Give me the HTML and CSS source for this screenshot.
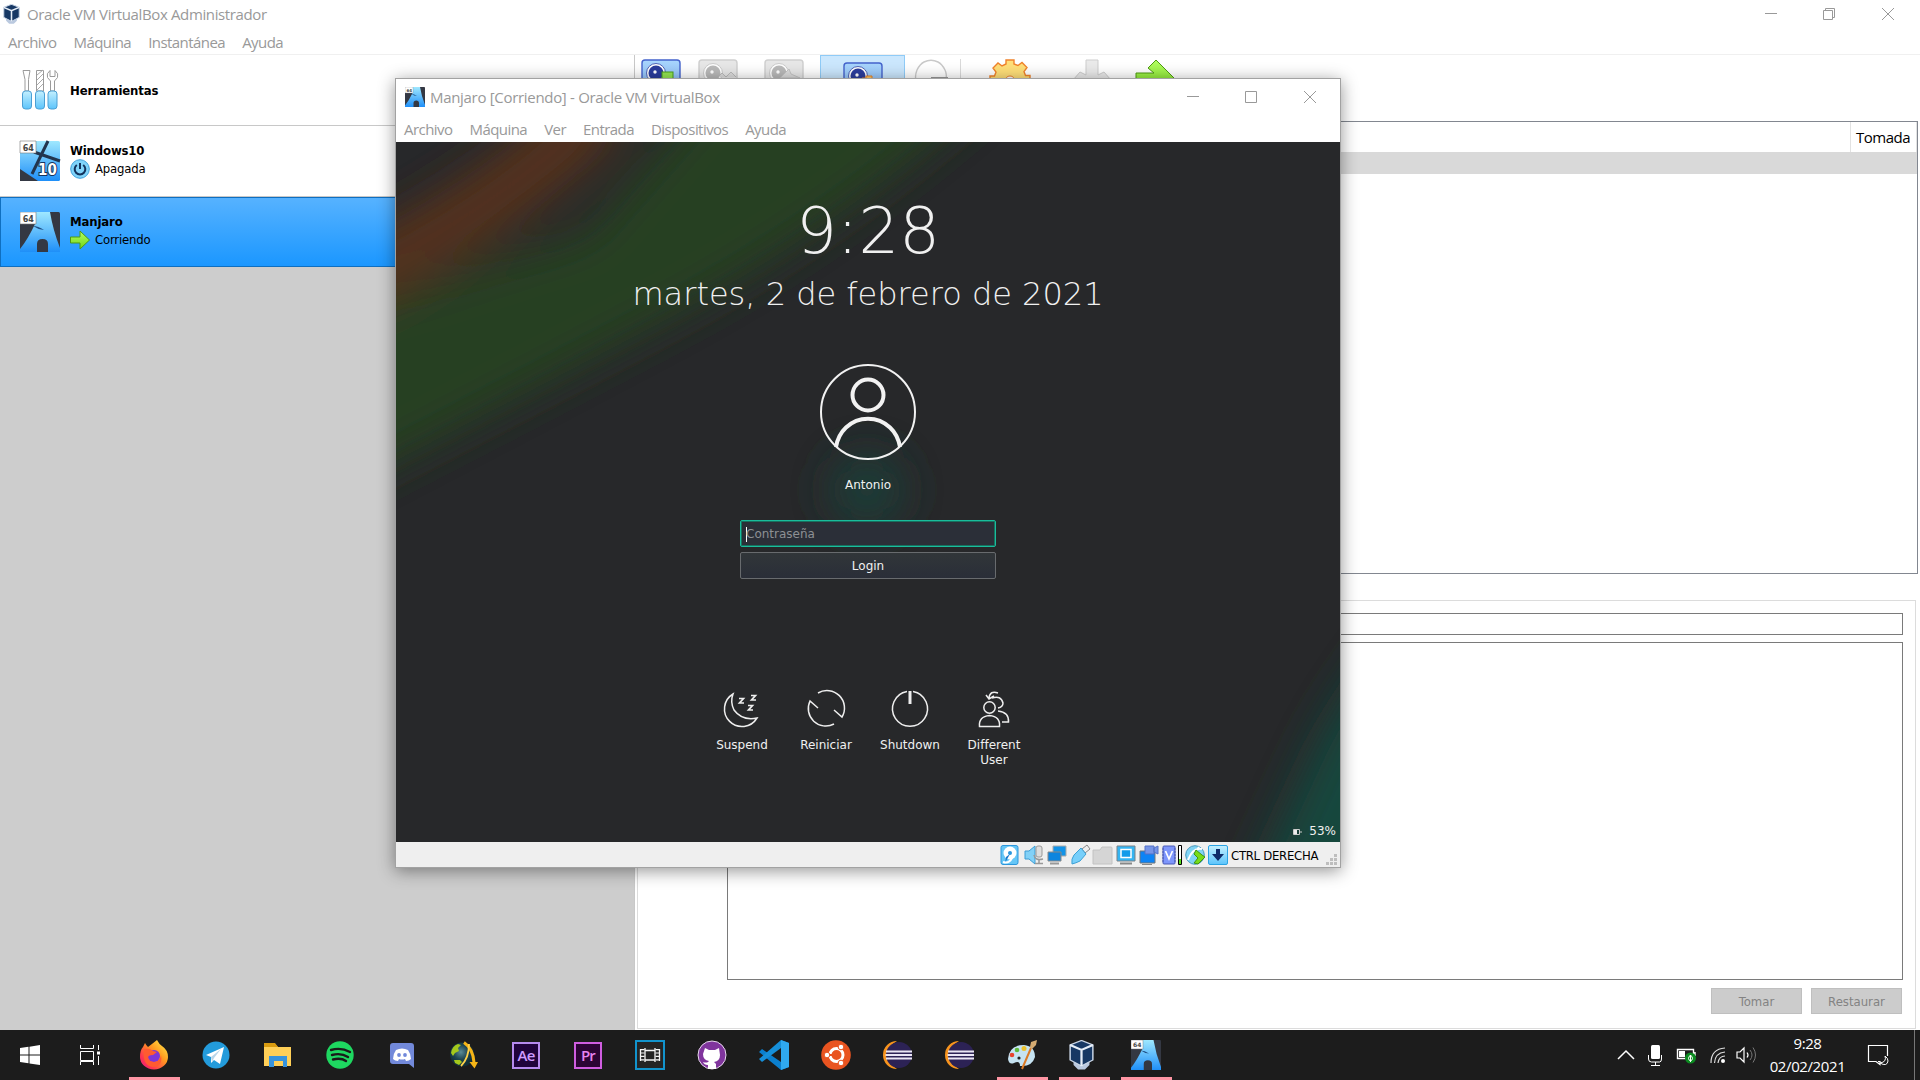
FILE: index.html
```html
<!DOCTYPE html>
<html lang="es">
<head>
<meta charset="utf-8">
<title>Oracle VM VirtualBox Administrador</title>
<link rel="stylesheet" href="styles.css">
</head>
<body>
<svg class="defs" width="0" height="0" aria-hidden="true">
  <defs>
    <linearGradient id="sky" x1="0" y1="0" x2="0" y2="1"><stop offset="0" stop-color="#9fe8ff"/><stop offset="1" stop-color="#1f8ff8"/></linearGradient>
    <linearGradient id="ice" x1="0" y1="0" x2="0" y2="1"><stop offset="0" stop-color="#c4f0ff"/><stop offset="1" stop-color="#5cc4fb"/></linearGradient>
    <linearGradient id="lime" x1="0" y1="0" x2="0" y2="1"><stop offset="0" stop-color="#b4ff62"/><stop offset="1" stop-color="#6fd516"/></linearGradient>
    <linearGradient id="cam" x1="0" y1="0" x2="0" y2="1"><stop offset="0" stop-color="#a9d6fd"/><stop offset="1" stop-color="#7fb0f5"/></linearGradient>
    <linearGradient id="fox" x1="1" y1="0" x2="0" y2="1"><stop offset="0" stop-color="#fff44f"/><stop offset=".4" stop-color="#ff9a1f"/><stop offset=".75" stop-color="#ff3650"/><stop offset="1" stop-color="#e31587"/></linearGradient>
    <radialGradient id="globe" cx=".45" cy=".4"><stop offset="0" stop-color="#5b8b97"/><stop offset=".6" stop-color="#1e4652"/><stop offset="1" stop-color="#123039"/></radialGradient>
    <symbol id="arch" viewBox="0 0 40 40">
      <rect width="40" height="40" rx="1.500" fill="#343843"/>
      <path d="M16 0h14q3 18 10 36v4H28v-8q0-5-5.500-5T17 32v8H0v-3Q8 27 15 12z" fill="url(#sky)"/>
      <path d="M13 14q5 0 11 4-6-.500-11-4" fill="#1d4d82"/>
      <path d="M0 0h16v12H0z" fill="#fff" stroke="#777" stroke-width=".6"/>
      <text x="2.800" y="9.500" class="badge-text">64</text>
    </symbol>
    <symbol id="cube" viewBox="1 0 22 30" preserveAspectRatio="none">
      <path d="M5 20h14v5l-4 4.500H9L5 25z" fill="#bac9df"/>
      <path d="M12 .5 22 5v15l-10 6L2 20V5z" fill="#173864" stroke="#cad6e6" stroke-width="1.300"/>
      <path d="M2 5l10 5L22 5M12 10v16" fill="none" stroke="#e6eef8" stroke-width="2"/>
    </symbol>
    <symbol id="camera" viewBox="0 0 40 40">
      <rect x="1" y="1" width="38" height="38" rx="3" fill="url(#cam)" stroke="#4463cc" stroke-width="1.400"/>
      <circle cx="15" cy="14" r="9.500" fill="#fff" stroke="#5064b8"/><circle cx="15" cy="14" r="7.500" fill="#2b3d9d"/><circle cx="14" cy="13" r="1.700" fill="#fff"/>
    </symbol>
    <symbol id="camera-off" viewBox="0 0 40 40">
      <rect x="1" y="1" width="38" height="38" rx="3" fill="#e7e7e7" stroke="#cfcfcf" stroke-width="1.400"/>
      <circle cx="15" cy="14" r="9.500" fill="#fff" stroke="#ccc"/><circle cx="15" cy="14" r="7.500" fill="#bababa"/><circle cx="14" cy="13" r="1.700" fill="#fff"/>
    </symbol>
    <symbol id="eclipse" viewBox="0 0 30 28">
      <path d="M15 0A14 14 0 0 0 15 28 16 16 0 0 1 15 0" fill="#f7941e"/>
      <circle cx="17" cy="14" r="13" fill="#2c2255"/>
      <path d="M4 10.500h26M3.500 14h27M4 17.500h26" stroke="#e9e6f4" stroke-width="2"/>
    </symbol>
    <symbol id="arrow" viewBox="0 0 20 20">
      <path d="M.5 7H10V1l9.500 9-9.500 9v-6H.5z" fill="url(#lime)" stroke="#4f9a13"/>
    </symbol>
  </defs>
</svg>

<div class="desktop">
  <main class="manager">
    <header class="titlebar">
      <svg class="title-icon" viewBox="0 0 17 20"><use href="#cube" width="17" height="20"/></svg>
      <span class="title-text">Oracle VM VirtualBox Administrador</span>
      <div class="window-buttons">
        <svg width="12" height="12"><path d="M1 5.500h12"/></svg>
        <svg width="12" height="12"><path d="M.5 2.500h9v9h-9zM2.500 2.500v-2h9v9h-2"/></svg>
        <svg width="12" height="12"><path d="M0 0l12 12M12 0L0 12"/></svg>
      </div>
    </header>
    <nav class="menubar"><span>Archivo</span><span>Máquina</span><span>Instantánea</span><span>Ayuda</span></nav>
    <div class="workspace">
      <aside class="sidebar">
        <div class="machine tools">
          <svg class="machine-icon" viewBox="0 0 40 40">
            <g fill="#fff" stroke="#9b9b9b"><path d="M3 .5h7l-1.500 9V21H5V9.500zM16.500.5h7V21h-7z"/><path d="M30 .5q-4 3-2.500 7l3 3.500v10h4V11l3-3.500q1.500-4-2.500-7v6h-5z"/></g>
            <path d="M17 5l6-5M17 10l6-6M17 15l6-6M17 20l6-6" stroke="#aaa"/>
            <g fill="url(#ice)" stroke="#4b9fd4"><rect x="2.500" y="21" width="9" height="18" rx="3"/><rect x="15.500" y="21" width="9" height="18" rx="3"/><rect x="28" y="21" width="9" height="18" rx="3"/></g>
          </svg>
          <div class="machine-info"><b>Herramientas</b></div>
        </div>
        <div class="machine">
          <svg class="machine-icon" viewBox="0 0 40 40">
            <rect width="40" height="40" rx="1.500" fill="url(#sky)"/>
            <path d="M0 28l18 12H0z" fill="#343843"/>
            <path d="M28 0L12 33M14 11l26 9" stroke="#22354e" stroke-width="3"/>
            <path d="M0 0h16v12H0z" fill="#fff" stroke="#777" stroke-width=".6"/><text x="2.800" y="9.500" class="badge-text">64</text>
            <text x="18" y="34" class="ten-text">10</text>
          </svg>
          <div class="machine-info"><b>Windows10</b>
            <span class="state"><svg width="20" height="20"><circle cx="10" cy="10" r="9.300" fill="#7fd3fa" stroke="#3f9fda"/><path d="M10 4v6M6.800 6a5.300 5.300 0 1 0 6.400 0" fill="none" stroke="#12325c" stroke-width="2"/></svg>Apagada</span></div>
        </div>
        <div class="machine selected">
          <svg class="machine-icon" viewBox="0 0 40 40"><use href="#arch"/></svg>
          <div class="machine-info"><b>Manjaro</b>
            <span class="state"><svg width="20" height="20"><use href="#arrow"/></svg>Corriendo</span></div>
        </div>
      </aside>
      <section class="snapshots">
        <div class="toolbar">
          <svg class="tool take" viewBox="0 0 40 40"><use href="#camera"/><rect x="21" y="13" width="11" height="14" fill="#94e552" stroke="#4aa01d"/></svg>
          <svg class="tool remove" viewBox="0 0 40 40"><use href="#camera-off"/><path d="M20 18l4-4 4 4 5-5 5 5" fill="#ddd" stroke="#bbb"/></svg>
          <svg class="tool restore" viewBox="0 0 40 40"><use href="#camera-off"/><path d="M25 10l-9 9h20l-9-4z" fill="#ddd" stroke="#c5c5c5"/></svg>
          <div class="tool-active"><svg viewBox="0 0 40 40"><use href="#camera"/><path d="M19 19v-3h4v-2h6v3h4l3 3v10H19z" fill="#ffca65" stroke="#e58328"/></svg></div>
          <svg class="tool clone" viewBox="0 0 40 40"><path d="M5 26q-3-8 0-15 3-6 7-8 7-3.500 14 0 4 2 7 8 2 4 1 10" fill="#fff" stroke="#c9c9c9" stroke-width="1.400"/><path d="M19 19.500h17" stroke="#999" stroke-width="3"/></svg>
          <i class="separator"></i>
          <svg class="tool gear" viewBox="0 0 40 40"><path d="M16 5V1h8v4l4 1.500 4-3 5 5-3 4 1.500 4H40v8h-4L20 36 4 24H0v-7h4.500l1.500-4-3-4 5-5 4 3z" fill="#ffdf79" stroke="#f0832b" stroke-width="1.400"/><circle cx="20" cy="22" r="5" fill="#fff" stroke="#f0832b"/></svg>
          <svg class="tool down" viewBox="0 0 40 40"><path d="M14 1h12v15l6-3 7 8-19 18L1 21l7-8 6 3z" fill="#eaeaea" stroke="#cdcdcd"/></svg>
          <svg class="tool start" viewBox="0 0 40 40"><path d="M0 14h18l-6-5 8-8 19 19-19 19-8-9 5-5H0z" fill="url(#lime)" stroke="#4f9a13"/></svg>
        </div>
        <div class="table">
          <div class="table-head"><span></span><span class="column-date">Tomada</span></div>
          <div class="table-row"></div>
        </div>
        <div class="details">
          <div class="name-box"></div>
          <div class="description-box"></div>
          <div class="detail-buttons"><span>Tomar</span><span>Restaurar</span></div>
        </div>
      </section>
    </div>
  </main>

  <footer class="taskbar">
    <div class="apps">
      <div class="app start"><svg width="20" height="20"><path d="M0 3l8.500-1.200v7.700H0zM9.500 1.700L20 0v9.500H9.500zM0 10.500h8.500v7.700L0 17zM9.500 10.500H20V20L9.500 18.500z" fill="#fff"/></svg></div>
      <div class="app view"><svg width="21" height="20"><path d="M.5 0v3.500h13V0M.5 6.500h13v9H.5zM.5 20v-3.500h13V20M18.500 0v5M18.500 11v9" fill="none" stroke="#fff"/><path d="M17 6.500h3v3h-3z" fill="#fff"/></svg></div>
      <div class="app open"><svg width="30" height="30" viewBox="0 0 30 30"><path d="M18 0q2 4 5 6 6 4 6 11a14 12.500 0 0 1-28 0q0-7 3-10l2-4q1 2 3 4 4-3 9-7" fill="url(#fox)"/><circle cx="15" cy="16" r="6" fill="#7c36d8"/><path d="M5 9q6-1 9 2l4 1-4 3q-6 0-5 4 2 3 6 3 6 0 7-7 2 12-8 12Q3 26 5 9" fill="#ff5b30"/></svg></div>
      <div class="app"><svg width="28" height="28"><circle cx="14" cy="14" r="13.500" fill="#239bdb"/><path d="M4 14l18-8-4 17-6-4-3 3v-6z" fill="#fff"/><path d="M9 16l10-8-7 9-2 4z" fill="#b9d5e9"/></svg></div>
      <div class="app"><svg width="28" height="26"><path d="M0 2h11l3 3h13v19H0z" fill="#ffcf57"/><path d="M0 1h11l3 4H0z" fill="#d99b10"/><path d="M5 14h18v11h-4v-6h-9v6H5z" fill="#3793dc"/></svg></div>
      <div class="app"><svg width="28" height="28"><circle cx="14" cy="14" r="13.700" fill="#1ed760"/><path d="M5 9q10-3 19 2M6 14q9-2.500 16 2M7 18.500q8-2 13 1.500" fill="none" stroke="#1a1a1a" stroke-width="2.400" stroke-linecap="round"/></svg></div>
      <div class="app"><svg width="24" height="26"><path d="M3 1h18q3 0 3 3v22l-5-4H3q-3 0-3-3V4q0-3 3-3" fill="#7289da"/><path d="M6 8q6-3 12 0 3 4 3 9-2 2-5 2l-1-2q-3 1-6 0l-1 2q-3 0-5-2 0-5 3-9" fill="#fff"/><circle cx="9" cy="13" r="1.900" fill="#7289da"/><circle cx="15" cy="13" r="1.900" fill="#7289da"/></svg></div>
      <div class="app"><svg width="28" height="28"><circle cx="12" cy="13.500" r="12" fill="url(#globe)"/><path d="M1 12Q2 5 8 3l3 1-3 3 1 3-4 2-2 3zM4 19l6 0 2 2-3 3-4-2z" fill="#a5c91c"/><path d="M14 1.500q9 6 10 20" fill="none" stroke="#f6b517" stroke-width="3"/><path d="M19.500 21H28l-3.500 6.500z" fill="#f6b517"/><path d="M19 3q0 14-8 22" fill="none" stroke="#ffd24a" stroke-width="1.800"/></svg></div>
      <div class="app"><div class="adobe ae">Ae</div></div>
      <div class="app"><div class="adobe pr">Pr</div></div>
      <div class="app"><svg width="30" height="30"><path d="M1 1h28v28H1z" fill="#242424" stroke="#1293cc" stroke-width="2"/><path d="M5.500 9v12M10 8v14M20 8v14M24.500 9v12M10 10.500h10M10 20h10" stroke="#f5f5f5" stroke-width="1.300"/><path d="M7.500 9v13M22.500 9v13" stroke="#f5f5f5" stroke-width="4" stroke-dasharray="1.200 2.200"/></svg></div>
      <div class="app"><svg width="30" height="30"><circle cx="15" cy="15" r="14" fill="#80359d" stroke="#e6d9ec"/><path d="M8 8l4 2h6l4-2 1 7q0 6-6 7l2 2v5h-8v-4q-4 0-5-3 3 1 5 0l1-1q-6-1-6-7z" fill="#fff"/></svg></div>
      <div class="app"><svg width="30" height="30"><path d="M22 0l8 3v24l-8 3L0 12l3-3 19 13z" fill="#0b7fce"/><path d="M22 0L0 19l3 3L22 8z" fill="#168fd9"/><path d="M22 0l8 3v24l-8 3z" fill="#2fa9ef"/></svg></div>
      <div class="app"><svg width="30" height="30"><circle cx="15" cy="15" r="14.800" fill="#e95420"/><circle cx="15.500" cy="15" r="6.500" fill="none" stroke="#fff" stroke-width="3"/><path d="M8 15h4M19 9l2-4M19 21l2 4" stroke="#e95420" stroke-width="2"/><g fill="#fff" stroke="#e95420"><circle cx="6" cy="15" r="2.800"/><circle cx="20" cy="7" r="2.800"/><circle cx="20" cy="23" r="2.800"/></g></svg></div>
      <div class="app"><svg class="eclipse" width="30" height="28"><use href="#eclipse"/></svg></div>
      <div class="app"><svg class="eclipse" width="30" height="28"><use href="#eclipse"/></svg></div>
      <div class="app open"><svg width="30" height="30"><path d="M1 19Q2 5 17 5q11 1 11 12-3 10-15 9 0-6-6-3-5 2-6-4" fill="#c6e3f2"/><circle cx="5" cy="15" r="2.300" fill="#e8432f"/><circle cx="10" cy="10" r="2.300" fill="#5fb93c"/><circle cx="17" cy="8.500" r="2.500" fill="#ecc22e"/><circle cx="12" cy="18" r="1.600" fill="#222"/><path d="M24 8L15 29" stroke="#db7a26" stroke-width="2"/><path d="M23 7l1-5 6-2-1 5-4 4z" fill="#d5ab72"/></svg></div>
      <div class="app open"><svg class="vbox" width="25" height="30"><use href="#cube"/></svg></div>
      <div class="app open"><svg width="30" height="30"><use href="#arch"/></svg></div>
    </div>
    <div class="tray">
      <svg width="18" height="10"><path d="M1 9l8-8 8 8" fill="none" stroke="#fff" stroke-width="1.500"/></svg>
      <svg width="14" height="21"><rect x="3" y="0" width="9" height="14" rx="1.500" fill="#fff"/><path d="M.5 10v4q0 3 3 3h8q2 0 2-3v-4M7.500 17v3.500M3 20.500h9" fill="none" stroke="#fff"/></svg>
      <svg width="20" height="18"><path d="M.5 3.500h16v9H.5zM18 6v4" fill="none" stroke="#fff" stroke-width="1.400"/><path d="M2 5h6v6H2z" fill="#fff"/><circle cx="13.500" cy="12" r="5.500" fill="#0b8b20"/><path d="M13.500 9q4 4 0 6-4-2 0-6v7" fill="none" stroke="#fff"/></svg>
      <svg width="16" height="16"><path d="M1 16Q1 2 15 1M4.500 16Q5 6 15 5M8 16q1-7 7-7" fill="none" stroke="#ddd" stroke-width="1.200"/><circle cx="13" cy="14" r="2" fill="#fff"/></svg>
      <svg width="21" height="18"><path d="M1 6h3l4-4v14l-4-4H1zM11 6.500q2 2.500 0 5" fill="none" stroke="#fff" stroke-width="1.200"/><path d="M14 4q4 5 0 10M17 1.500q5 7.500 0 15" fill="none" stroke="#777"/></svg>
      <div class="clock"><span>9:28</span><span>02/02/2021</span></div>
      <svg class="notice" width="21" height="21"><path d="M10 16.500h2v3l-4-3H.5V.5h19V11" fill="none" stroke="#fff" stroke-width="1.200"/><path d="M17 11q2 6-5 7 7 4 8-2 0-3-3-5" fill="#1c1c1c" stroke="#fff"/></svg>
      <i class="peek"></i>
    </div>
  </footer>

  <section class="guest">
    <header class="guest-title">
      <svg width="20" height="20"><use href="#arch"/></svg>
      <span class="guest-text">Manjaro [Corriendo] - Oracle VM VirtualBox</span>
      <div class="window-buttons">
        <svg width="12" height="12"><path d="M1 5.500h12"/></svg>
        <svg width="12" height="12"><path d="M.5.5h11v11H.5z"/></svg>
        <svg width="12" height="12"><path d="M0 0l12 12M12 0L0 12"/></svg>
      </div>
    </header>
    <nav class="menubar guest-menu"><span>Archivo</span><span>Máquina</span><span>Ver</span><span>Entrada</span><span>Dispositivos</span><span>Ayuda</span></nav>
    <div class="screen">
      <svg class="wallpaper" width="944" height="700" viewBox="0 0 944 700">
        <defs><filter id="soft" x="-50%" y="-50%" width="200%" height="200%"><feGaussianBlur stdDeviation="22"/></filter></defs>
        <rect width="944" height="700" fill="#27282a"/>
        <g filter="url(#soft)">
          <path d="M205-35Q115 60-50 140" fill="none" stroke="#55301c" stroke-width="66"/>
          <path d="M-90 365V195Q60 128 190 92L350-90H640Q465 75 275 175T-90 365" fill="#263f22"/>
          <path d="M1020 460Q945 550 915 615T830 800H1020z" fill="#17473d"/>
          <circle cx="471" cy="348" r="37" fill="#1a3d37"/>
        </g>
      </svg>
      <div class="login">
        <div class="time">9:28</div>
        <div class="date">martes, 2 de febrero de 2021</div>
        <svg class="avatar" width="96" height="96"><g fill="none" stroke="#f2f2f2"><circle cx="48" cy="48" r="47" stroke-width="2"/><circle cx="48" cy="31" r="15.500" stroke-width="4"/><path d="M16 83Q18 71 26 63.500a32 32 0 0 1 44 0Q78 71 80 83" stroke-width="4"/></g></svg>
        <div class="user">Antonio</div>
        <div class="password"><i></i>Contraseña</div>
        <div class="login-button">Login</div>
        <div class="actions">
          <div><svg width="38" height="38" viewBox="0 0 38 38"><path d="M10 4A17.500 17.500 0 1 0 34 28Q19 31 11 20 7 12 10 4z"/><path d="M16 8.500h4.500l-4 4.500H21M28 5.500h4.500l-4 4.500H33M25 15.500h4.500l-4 4.500H30" stroke-width="1.700"/></svg><span>Suspend</span></div>
          <div><svg width="38" height="38" viewBox="0 0 38 38"><path d="M11 3A17.500 17.500 0 0 1 35 27l-8-7M27 34A17.500 17.500 0 0 1 3 11l8 7"/></svg><span>Reiniciar</span></div>
          <div><svg width="38" height="38" viewBox="0 0 38 38"><path d="M16 1.500a17.500 17.500 0 1 0 6 0"/><path d="M19 1v13" stroke-width="3"/></svg><span>Shutdown</span></div>
          <div><svg width="38" height="38" viewBox="0 0 38 38"><circle cx="14.500" cy="17.500" r="5.700"/><path d="M4.500 36.500q-1-10 10-11 11 1 10 11zM17 8q9-3 11 5 0 4-5 5M23 21q11 1 10.500 11H27M23 3q-8-3-9 5M11 5l3 4 5-3"/></svg><span>Different User</span></div>
        </div>
      </div>
      <div class="battery"><svg width="9" height="6"><path d="M.5.500h6v5h-6zM8 2v2" fill="none" stroke="#ccc"/><path d="M1 1h3v4H1z" fill="#eee"/></svg>53%</div>
    </div>
    <footer class="guest-status">
      <svg class="disk" viewBox="0 0 20 20"><rect x="1" y="0.500" width="17" height="19" rx="2" fill="#65c6f6" stroke="#2c96dc"/><circle cx="10" cy="8" r="6.500" fill="#fff"/><circle cx="10" cy="8" r="2" fill="#2c96dc"/><path d="M10 9l-5 9 1-6z" fill="#1b78ca"/><path d="M3 17q6 2 9-4" fill="none" stroke="#fff" stroke-width="2"/></svg>
      <svg viewBox="0 0 20 20"><path d="M1 6h4l6-5v18l-6-5H1z" fill="#82d1f7" stroke="#3c9cd4"/><rect x="12" y="1" width="6" height="11" rx="2" fill="#ddd" stroke="#999"/><path d="M10 10q1 6 9 4M15 15v4M11 18.500h8" fill="none" stroke="#999" stroke-width="1.500"/></svg>
      <svg viewBox="0 0 20 20"><path d="M6 1h13v10H6z" fill="#1193e8" stroke="#aaa"/><path d="M1 7h13v9H1z" fill="#0c85df" stroke="#888"/><path d="M3 18.500h9" stroke="#999" stroke-width="2"/></svg>
      <svg viewBox="0 0 20 20"><path d="M12 4l5-4 3 4-5 4z" fill="#eee" stroke="#888"/><path d="M4 10l7-7 5 6-6 7q-4 2-8 3-1-5 2-9" fill="#77cffa" stroke="#3ca0d4"/></svg>
      <svg viewBox="0 0 20 20"><path d="M0 5h7l2-3h9q1 0 1 1v16H0z" fill="#d5d5d5" stroke="#c2c2c2"/></svg>
      <svg viewBox="0 0 20 20"><path d="M1 1h18v15H1z" fill="#34b4f2" stroke="#7a8187"/><path d="M5 4.500h10v8H5z" fill="#129bea" stroke="#fff" stroke-width="1.500"/><path d="M4 18.500h12" stroke="#888" stroke-width="2"/></svg>
      <svg viewBox="0 0 20 20"><path d="M1 6h15v12H1z" fill="#0d83f5" stroke="#777"/><path d="M6 1h9v8H6zM15 3l4-2v8l-4-2z" fill="#7694e6" stroke="#5370c7"/><path d="M3 19.500h10" stroke="#888"/></svg>
      <svg class="cpu" viewBox="0 0 21 20"><rect x="1" y="1" width="12" height="18" rx="1" fill="#7e96fb" stroke="#4b5bb7"/><path d="M0 4h14M0 7h14M0 10h14M0 13h14M0 16h14" stroke="#4b5bb7" stroke-dasharray="2 10"/><path d="M3.500 6L7 14l3.500-8" fill="none" stroke="#fff" stroke-width="1.700"/><path d="M16.500.5h3v19h-3z" fill="#fff" stroke="#000"/><path d="M17 14h2v5h-2z" fill="#5be01d"/></svg>
      <svg viewBox="0 0 20 20"><circle cx="10" cy="10" r="9.300" fill="#80d4f5" stroke="#4799bf"/><path d="M3 15Q8 2 17 4M14 2l-2 3" fill="none" stroke="#fff" stroke-width="2"/><path d="M11 5l6 5 3 2-7 7-4-1 4-5-4-4z" fill="#77dc18" stroke="#3e950d"/></svg>
      <svg viewBox="0 0 20 20"><rect x=".5" y=".5" width="19" height="19" rx="1.500" fill="url(#ice)" stroke="#2aa3e4"/><path d="M8 4h4v5h4l-6 7-6-7h4z" fill="#0e2b69"/></svg>
      <span class="host-key">CTRL DERECHA</span>
      <svg class="grip" width="11" height="11" viewBox="0 0 11 11"><path d="M8 0h3v3H8zM8 4h3v3H8zM4 4h3v3H4zM0 8h3v3H0zM4 8h3v3H4zM8 8h3v3H8z" fill="#bebebe"/></svg>
    </footer>
  </section>
</div>
</body>
</html>
```
FILE: styles.css
```css
* { box-sizing: border-box; }
body { margin: 0; background: #fff; color: #000; font-family: "Open Sans", "Noto Sans", sans-serif; font-size: 15px; }
svg { display: block; flex: none; overflow: visible; }
i { display: block; }
.defs { position: absolute; }
.badge-text { font: bold 8px "DejaVu Sans", sans-serif; fill: #444; }
.ten-text { font: bold 15px "DejaVu Sans Condensed", "DejaVu Sans", sans-serif; fill: #fff; stroke: #17345d; stroke-width: 2px; paint-order: stroke; }

.desktop { position: relative; width: 1920px; height: 1080px; overflow: hidden; display: flex; flex-direction: column; }
.manager { height: 1030px; display: flex; flex-direction: column; background: #fff; }

.titlebar { height: 28px; display: flex; align-items: center; padding: 0 26px 0 3px; color: #999; }
.title-icon { width: 17px; height: 20px; margin-right: 7px; }
.title-text, .guest-text { line-height: 20px; letter-spacing: -.37px; }
.guest-text { letter-spacing: -.31px; }
.window-buttons { margin-left: auto; display: flex; gap: 47px; fill: none; stroke: #999; }
.menubar { height: 27px; display: flex; gap: 17px; padding: 4px 8px 0; border-bottom: 1px solid #f0f0f0; color: #999; line-height: 20px; letter-spacing: -.55px; }

.workspace { flex: 1; display: flex; min-height: 0; }
.sidebar { width: 635px; background: #cdcdcd; border-right: 1px solid #c8c8c8; }
.machine { height: 71px; display: flex; align-items: center; padding-left: 20px; background: #fff; border-bottom: 1px solid #c8c8c8; }
.machine.selected { height: 70px; border: 1px solid #0f6fc0; padding-left: 19px; background: linear-gradient(#56b2ff, #1b97ff); }
.machine-icon { width: 40px; height: 40px; margin-right: 10px; }
.machine-info { padding-bottom: 3px; font: 13px/18px "DejaVu Sans Condensed", "DejaVu Sans", sans-serif; letter-spacing: -.2px; }
.tools .machine-info { padding: 2px 0 0; }
.machine-info b { display: block; letter-spacing: -.15px; }
.state { display: flex; align-items: center; gap: 5px; height: 18px; }

.snapshots { flex: 1; padding: 0 2px 1px 2px; display: flex; flex-direction: column; }
.toolbar { height: 66px; display: flex; align-items: flex-start; padding-left: 4px; }
.tool { width: 40px; height: 40px; margin-top: 4px; }
.take { margin-right: 17px; }
.remove { margin-right: 26px; }
.restore { margin-right: 16px; }
.tool-active { width: 85px; height: 60px; padding: 6px 0 0 22px; background: #cbe7fd; border: 1px solid #8fcbf7; }
.tool-active svg { width: 40px; height: 40px; }
.clone { margin-left: 7px; }
.separator { width: 1px; height: 50px; margin: 4px 29px 0 8px; background: #dadada; }
.gear { margin-right: 42px; }
.down { margin-right: 24px; }
.table { height: 453px; border: 1px solid #828790; }
.table-head { height: 30px; display: flex; }
.table-head span:first-child { flex: 1; }
.column-date { width: 67px; border-left: 1px solid #e2e2e2; border-right: 1px solid #e2e2e2; padding-left: 5px; line-height: 30px; letter-spacing: -.5px; }
.table-row { height: 22px; background: #d9d9d9; }
.details { flex: 1; margin: 26px 2px 0 0; padding: 12px 12px 14px 89px; border: 1px solid #dcdcdc; display: flex; flex-direction: column; }
.name-box { height: 22px; border: 1px solid #7a7a7a; }
.description-box { flex: 1; margin-top: 7px; border: 1px solid #7a7a7a; }
.detail-buttons { display: flex; justify-content: flex-end; gap: 9px; margin: 8px 1px 0 0; }
.detail-buttons span { width: 91px; height: 26px; border: 1px solid #bfbfbf; background: #ccc; color: #838383; text-align: center; font: 13px/26px "DejaVu Sans Condensed", "DejaVu Sans", sans-serif; }

.taskbar { height: 50px; background: #1c1c1c; color: #fff; display: flex; justify-content: space-between; }
.apps { display: flex; }
.app { width: 62px; display: flex; align-items: center; justify-content: center; }
.app.start { width: 60px; }
.app.view { width: 63px; padding-right: 2px; }
.app.open { background: linear-gradient(#ff96a4, #ff96a4) center bottom / 51px 3px no-repeat; }
.eclipse { margin-right: 2px; }
.vbox { margin-right: 5px; }
.adobe { width: 28px; height: 27px; text-align: center; font: 600 15px/22px "Open Sans", sans-serif; letter-spacing: -.8px; }
.ae { border: 2px solid #b68aef; background: #20033c; color: #cf9cff; }
.pr { border: 2px solid #cf5de0; background: #2b0434; color: #e783f0; }
.tray { display: flex; align-items: center; }
.tray > svg { margin-right: 13px; }
.tray > svg:nth-child(2) { margin-right: 15px; }
.tray > svg:nth-child(4) { margin-right: 10px; }
.tray > svg:nth-child(5) { margin-right: 12px; }
.clock { width: 77px; display: flex; flex-direction: column; text-align: center; line-height: 23px; letter-spacing: -.4px; white-space: nowrap; }
.tray > svg.notice { margin: 0 25px 0 22px; }
.peek { width: 6px; height: 50px; border-left: 1px solid #777; }

.guest { position: absolute; left: 395px; top: 78px; width: 946px; height: 790px; background: #fff; border: 1px solid #a2a2a2; box-shadow: 0 3px 16px rgba(0, 0, 0, .42); display: flex; flex-direction: column; }
.guest-title { height: 36px; display: flex; align-items: center; gap: 5px; padding: 0 24px 0 9px; color: #999; }
.guest-menu { height: 27px; padding-top: 4px; border: 0; }
.screen { position: relative; height: 700px; overflow: hidden; color: #f0f0f0; font: 12px/15px "DejaVu Sans", sans-serif; }
.wallpaper { position: absolute; inset: 0; }
.login { position: relative; display: flex; flex-direction: column; align-items: center; }
.time { margin-top: 51px; font: 200 64px/76px "DejaVu Sans Light", "DejaVu Sans", sans-serif; }
.date { margin-top: 5px; font: 200 32px/40px "DejaVu Sans Light", "DejaVu Sans", sans-serif; white-space: nowrap; }
.avatar { margin-top: 50px; }
.user { margin-top: 18px; }
.password { width: 256px; height: 27px; margin-top: 27px; padding: 1px 5px 0; display: flex; align-items: center; border: 1px solid #1abc9c; border-radius: 2px; background: #2b2f38; color: #8d9094; box-shadow: inset 0 0 0 1px #17715f; }
.password i { width: 1px; height: 15px; margin-right: -1px; background: #fff; }
.login-button { width: 256px; height: 27px; margin-top: 5px; border: 1px solid #686b6e; border-radius: 2px; background: linear-gradient(#313639, #2a2e38); text-align: center; line-height: 27px; }
.actions { display: flex; margin-top: 111px; }
.actions > div { width: 84px; display: flex; flex-direction: column; align-items: center; text-align: center; }
.actions svg { fill: none; stroke: #eee; stroke-width: 1.500; }
.actions span { width: 66px; margin-top: 10px; }
.battery { position: absolute; right: 4px; bottom: 3px; display: flex; align-items: center; gap: 7px; }
.guest-status { height: 25px; display: flex; align-items: center; gap: 3px; padding-left: 604px; background: #efefef; }
.guest-status svg { width: 20px; height: 20px; }
.guest-status svg.disk { margin-right: 1px; }
.guest-status svg.cpu { width: 21px; margin-right: -1px; }
.guest-status svg.grip { width: 11px; height: 11px; margin: 10px 3px 0 auto; }
.host-key { padding-top: 2px; font: 13px/20px "DejaVu Sans Condensed", "DejaVu Sans", sans-serif; letter-spacing: -.28px; white-space: nowrap; }
```
